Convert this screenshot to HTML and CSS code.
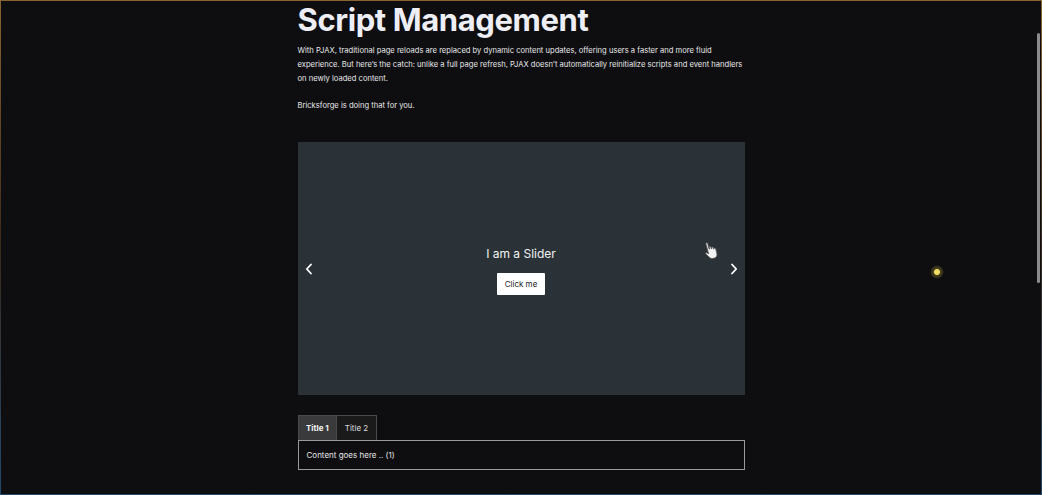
FILE: index.html
```html
<!DOCTYPE html>
<html>
    <head>
        <title>Script Management</title>
        <meta charset="utf-8">
        <meta name="viewport" content="width=device-width, initial-scale=1.0">
        <link rel="stylesheet" href="styles.css">
    </head>
    <body>
        <div class="frame"></div>

        <div class="container">
            <h1 class="title">Script Management</h1>
            <p class="intro">With PJAX, traditional page reloads are replaced by dynamic content updates, offering users a faster and more fluid experience. But here’s the catch: unlike a full page refresh, PJAX doesn’t automatically reinitialize scripts and event handlers on newly loaded content.</p>
            <p class="intro">Bricksforge is doing that for you.</p>

            <div class="slider">
                <button class="arrow arrow-prev" aria-label="Previous">
                    <svg width="8" height="12" viewBox="0 0 8 12"><path d="M6 1.5 1.8 6 6 10.5" fill="none" stroke="#fff" stroke-width="1.8" stroke-linecap="round" stroke-linejoin="round"/></svg>
                </button>
                <div class="slide">
                    <h3 class="slide-title">I am a Slider</h3>
                    <a class="slide-btn" href="#">Click me</a>
                </div>
                <button class="arrow arrow-next" aria-label="Next">
                    <svg width="8" height="12" viewBox="0 0 8 12"><path d="M2 1.5 6.2 6 2 10.5" fill="none" stroke="#fff" stroke-width="1.8" stroke-linecap="round" stroke-linejoin="round"/></svg>
                </button>
                <!-- mouse pointer from the recording -->
                <svg class="pointer" width="18" height="22" viewBox="0 0 18 22">
                    <path d="M5 2.5c0-1 1.8-1 1.8 0v6l.4-.1V7c0-1 1.7-1 1.7 0v1.8l.4 0V8c0-1 1.7-1 1.7 0v1.5l.4.1c0-1 1.7-1 1.7 0v4.6c0 2.4-1.3 4.3-3.5 4.3H8c-1.5 0-2.4-.9-3.2-2.1L2.3 12.4c-.5-.8.5-1.7 1.3-1L5 12.8z" fill="#f2f2f2" stroke="#555" stroke-width=".8"/>
                </svg>
            </div>

            <div class="tabs">
                <div class="tab-menu">
                    <div class="tab-title active">Title 1</div>
                    <div class="tab-title">Title 2</div>
                </div>
                <div class="tab-content">Content goes here .. (1)</div>
            </div>
        </div>

        <div class="click-dot"></div>
        <div class="scrollbar"></div>
    </body>
</html>
```

FILE: styles.css
```css
html, body{
      margin: 0;
      height: 100%;
      overflow: hidden;
}
body{
      font-family: Inter, "Noto Sans", sans-serif;
      background: #0e0e10;
      color: #f0f0f4;
}
.frame{
      position: fixed;
      inset: 0;
      border: 1px solid transparent;
      border-image: linear-gradient(to bottom, #8a6430, #3a2a1c 50%, #22496c) 1;
      pointer-events: none;
}
.container{
      width: 447px;
      margin: 0 auto;
}
.title{
      font-size: 31px;
      line-height: 40px;
      font-weight: 700;
      letter-spacing: -0.4px;
      margin: 0 0 4px;
      color: #eeeef6;
}
.intro{
      font-size: 7.6px;
      line-height: 14px;
      margin: 0 0 13px;
      color: #e8e8ea;
}
.intro + .intro{margin-bottom: 29px;}

.slider{
      position: relative;
      height: 253px;
      background: #2a3237;
      display: flex;
      align-items: center;
      justify-content: space-between;
}
.slide{
      display: flex;
      flex-direction: column;
      align-items: center;
      margin-top: 3px;
}
.slide-title{
      font-size: 12px;
      line-height: 16px;
      font-weight: 400;
      margin: 0 0 11px;
      color: #f2f2f2;
}
.slide-btn{
      display: block;
      width: 48px;
      height: 22px;
      line-height: 22px;
      text-align: center;
      font-size: 8px;
      background: #fff;
      color: #222;
      text-decoration: none;
      border-radius: 1px;
}
.arrow{
      background: none;
      border: 0;
      padding: 0;
      width: 20px;
      height: 20px;
      display: flex;
      align-items: center;
      justify-content: center;
      margin: 0 1px;
}
.pointer{
      position: absolute;
      left: 405px;
      top: 98px;
      transform: rotate(-15deg);
}

.tabs{margin-top: 20px;}
.tab-menu{display: flex;}
.tab-title{
      font-size: 8px;
      line-height: 24px;
      padding: 0 7.5px;
      border: 1px solid #4a4a4a;
      border-bottom: 0;
      background: #1a1a1b;
      color: #ddd;
}
.tab-title.active{
      background: #3a3a3c;
      font-weight: 700;
      color: #f4f4f4;
}
.tab-title + .tab-title{border-left: 0;}
.tab-content{
      border: 1px solid #9a9a9a;
      padding: 0 8px;
      height: 28px;
      line-height: 28px;
      font-size: 8px;
      color: #e6e6e6;
}

.click-dot{
      position: fixed;
      left: 930px;
      top: 265px;
      width: 14px;
      height: 14px;
      border-radius: 50%;
      background: radial-gradient(circle, #f4e060 0 2.5px, #4a4520 3.5px, #2a2816 6px, transparent 7px);
}
.scrollbar{
      position: fixed;
      right: 2px;
      top: 33px;
      width: 3px;
      height: 250px;
      background: #8c8c8c;
      border-radius: 2px;
}
```
